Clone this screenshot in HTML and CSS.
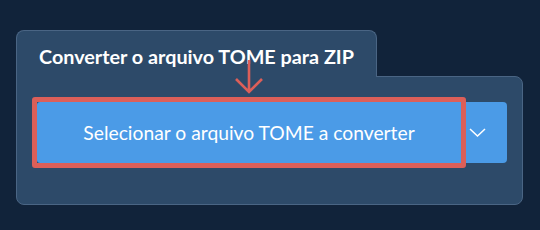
FILE: index.html
```html
<!DOCTYPE html>
<html lang="pt">
<head>
    <meta charset="UTF-8">
    <meta name="viewport" content="width=device-width, initial-scale=1.0">
    <title>Converter TOME para ZIP</title>
    <link rel="stylesheet" href="styles.css">
</head>
<body>
    <div class="converter">
        <div class="tab">Converter o arquivo TOME para ZIP</div>
        <div class="box">
            <div class="picker">
                <button class="select-btn">
                    Selecionar o arquivo TOME a converter
                    <span class="highlight"></span>
                    <svg class="pointer" width="30" height="36" viewBox="0 0 30 36">
                        <path d="M15 1 V33 M2 20 L15 33 L28 20" fill="none" stroke="#dc5f59" stroke-width="2.6"/>
                    </svg>
                </button>
                <button class="more-btn">
                    <svg width="17" height="9" viewBox="0 0 17 9">
                        <path d="M1 1 L8.5 8 L16 1" fill="none" stroke="#fff" stroke-width="1.5"/>
                    </svg>
                </button>
            </div>
        </div>
    </div>
</body>
</html>
```

FILE: styles.css
```css
body {
    margin: 0;
    background: #11233a;
    font-family: Lato, "Open Sans", sans-serif;
}

.converter {
    width: 507px;
    margin: 30px 0 0 16px;
}

.tab {
    position: relative;
    z-index: 1;
    display: inline-block;
    height: 47px;
    padding: 14px 22px 0 22px;
    box-sizing: border-box;
    margin-bottom: -1px;
    background: #2d4a69;
    border: 1px solid #4a6584;
    border-bottom: none;
    border-radius: 8px 8px 0 0;
    color: #fff;
    font-size: 19.8px;
    font-weight: bold;
    line-height: 22px;
}

.box {
    background: #2d4a69;
    border: 1px solid #4a6584;
    border-radius: 0 8px 8px 8px;
    padding: 25px 15px 41px 20px;
}

.picker {
    display: flex;
}

button {
    border: none;
    background: #4b9be7;
    color: #fff;
    font-family: inherit;
    cursor: pointer;
}

.select-btn {
    position: relative;
    width: 424px;
    height: 61px;
    font-size: 19.3px;
    border-radius: 3px 0 0 3px;
}

.highlight {
    position: absolute;
    top: -5px;
    left: -5px;
    right: -5px;
    bottom: -5px;
    border: 5px solid #dc5f59;
    border-radius: 3px;
}

.pointer {
    position: absolute;
    z-index: 2;
    left: 197px;
    top: -43px;
}

.more-btn {
    flex: 1;
    height: 61px;
    padding: 0 0 0 8px;
    text-align: left;
    border-radius: 0 4px 4px 0;
}

.more-btn svg {
    display: block;
}
```
